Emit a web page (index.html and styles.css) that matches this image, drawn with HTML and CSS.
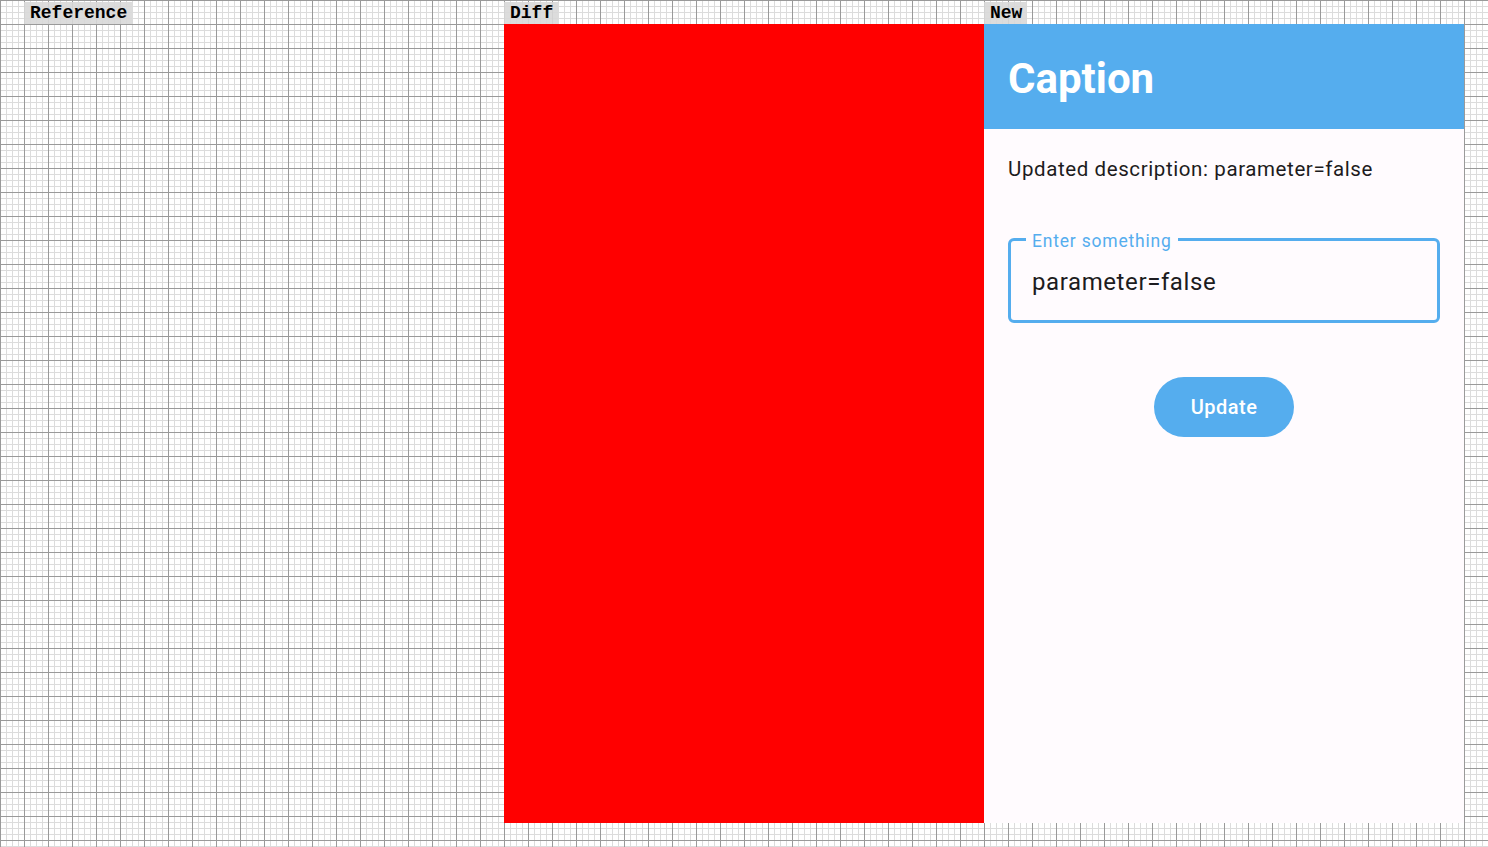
FILE: index.html
```html
<!DOCTYPE html>
<html>
<head>
<meta charset="utf-8">
<link rel="stylesheet" href="styles.css">
</head>
<body>
<div class="board">
  <div class="col">
    <div class="tag">Reference</div>
    <div class="panel panel-empty"></div>
  </div>
  <div class="col">
    <div class="tag">Diff</div>
    <div class="panel panel-diff"></div>
  </div>
  <div class="col">
    <div class="tag">New</div>
    <div class="panel app">
      <div class="appbar">Caption</div>
      <div class="content">
        <p class="desc">Updated description: parameter=false</p>
        <div class="field">
          <span class="field-label">Enter something</span>
          <div class="field-value">parameter=false</div>
        </div>
        <div class="actions">
          <button class="btn">Update</button>
        </div>
      </div>
    </div>
  </div>
</div>
</body>
</html>
```

FILE: styles.css
```css
html, body {
  margin: 0;
  padding: 0;
}
body {
  width: 1488px;
  height: 847px;
  overflow: hidden;
  background-color: #ffffff;
  background-image:
    linear-gradient(to right, #9a9a9a 1px, transparent 1px),
    linear-gradient(to bottom, #9a9a9a 1px, transparent 1px),
    linear-gradient(to right, #dcdcdc 1px, transparent 1px),
    linear-gradient(to bottom, #dcdcdc 1px, transparent 1px);
  background-size: 24px 24px, 24px 24px, 6px 6px, 6px 6px;
}
.board {
  display: flex;
  padding: 0 24px;
}
.col {
  width: 480px;
  display: flex;
  flex-direction: column;
  align-items: flex-start;
}
.tag {
  height: 22px;
  margin-top: 2px;
  padding: 0 5px 0 6px;
  background: rgba(216, 216, 216, 0.9);
  font-family: "Liberation Mono", monospace;
  font-weight: bold;
  font-size: 18px;
  line-height: 22px;
  color: #000;
}
.panel {
  width: 480px;
  height: 799px;
}
.panel-empty {
  background: transparent;
}
.panel-diff {
  background: #ff0000;
}
.app {
  background: #fffbfe;
  display: flex;
  flex-direction: column;
  font-family: Roboto, "Noto Sans", sans-serif;
}
.appbar {
  height: 105px;
  box-sizing: border-box;
  padding: 34px 24px 0;
  background: #55adee;
  color: #ffffff;
  font-size: 42px;
  font-weight: bold;
  line-height: 42px;
}
.content {
  padding: 28px 24px 0;
  display: flex;
  flex-direction: column;
}
.desc {
  margin: 0;
  font-size: 20.5px;
  line-height: 24px;
  letter-spacing: 0.6px;
  color: #1d1b20;
}
.field {
  position: relative;
  margin-top: 57px;
  height: 85px;
  box-sizing: border-box;
  border: 3px solid #55adee;
  border-radius: 6px;
  padding: 0 21px;
  display: flex;
  align-items: center;
}
.field-label {
  position: absolute;
  left: 15px;
  top: -10px;
  padding: 0 6px;
  background: #fffbfe;
  color: #55adee;
  font-size: 17.5px;
  line-height: 20px;
  letter-spacing: 0.8px;
}
.field-value {
  font-size: 24px;
  line-height: 28px;
  letter-spacing: 0.6px;
  color: #1d1b20;
  padding-top: 3px;
}
.actions {
  display: flex;
  justify-content: center;
  margin-top: 54px;
}
.btn {
  width: 140px;
  height: 60px;
  border: none;
  border-radius: 30px;
  background: #55adee;
  color: #ffffff;
  font-family: Roboto, "Noto Sans", sans-serif;
  font-size: 20px;
  font-weight: 500;
  letter-spacing: 0.5px;
  padding: 0;
}
```
